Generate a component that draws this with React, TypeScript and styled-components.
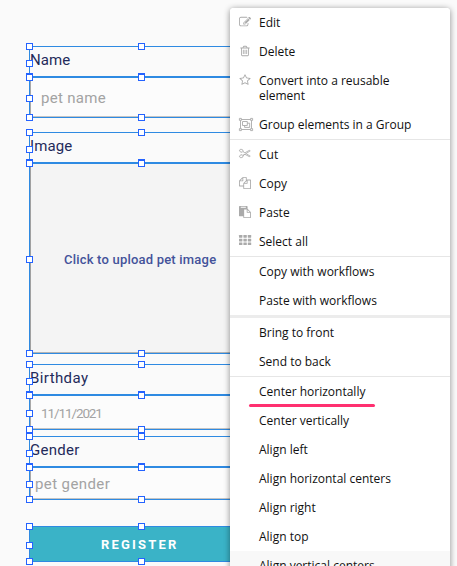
import React from "react";
import styled, { createGlobalStyle } from "styled-components";

const GlobalStyle = createGlobalStyle`
  * { box-sizing: border-box; }
  body { margin: 0; background: #fafafa; overflow: hidden; }
`;

const Page = styled.main`
  position: relative;
  width: 457px;
  height: 566px;
  overflow: hidden;
  background: #fafafa;
`;

const Form = styled.section`
  display: flex;
  flex-direction: column;
  width: 254px;
  padding: 46px 0 0 29px;
  font-family: Roboto, "Liberation Sans", sans-serif;
`;

const Group = styled.div<{ $gap: number }>`
  display: flex;
  flex-direction: column;
  margin-bottom: ${(p) => p.$gap}px;
`;

const Selected = styled.div<{ $height: number }>`
  position: relative;
  display: flex;
  height: ${(p) => p.$height}px;
  border: 1px solid #2e8ae2;
`;

const Handle = styled.i<{ $x: number; $y: number }>`
  position: absolute;
  left: ${(p) => p.$x - 4}px;
  top: ${(p) => p.$y - 4}px;
  width: 7px;
  height: 7px;
  border: 1px solid #2463ff;
  background: #fff;
  z-index: 1;
`;

const Label = styled.label`
  color: #1f2a5a;
  font-size: 15px;
  line-height: 26px;
  white-space: nowrap;
`;

const Field = styled.div<{ $indent: number }>`
  flex: 1;
  display: flex;
  align-items: center;
  padding: 2px 0 0 ${(p) => p.$indent}px;
  border-left: 1px solid #a9a9a9;
  border-bottom: 1px solid #c4c4c4;
  background: #fcfcfc;
  color: #a3a3a3;
`;

const Upload = styled.div`
  flex: 1;
  display: flex;
  align-items: center;
  padding: 3px 0 0 33px;
  border-left: 1px solid #a0a0a0;
  border-bottom: 1px solid #b4b4b4;
  background: #f4f4f4;
  color: #43529a;
`;

const Register = styled.div`
  flex: 1;
  display: flex;
  align-items: center;
  padding: 0 0 0 71px;
  background: #3ab3c7;
  color: #fff;
`;

const Text = styled.span<{ $size: number; $spacing: number; $weight?: number }>`
  font-size: ${(p) => p.$size}px;
  letter-spacing: ${(p) => p.$spacing}px;
  font-weight: ${(p) => p.$weight ?? 400};
  white-space: nowrap;
`;

const Menu = styled.nav`
  position: absolute;
  left: 230px;
  top: 8px;
  z-index: 2;
  width: 220px;
  height: 600px;
  border-radius: 4px;
  overflow: hidden;
  background: #fff;
  color: #111;
  font: 12px/15px "Open Sans", "Noto Sans", sans-serif;
`;

const Shadow = styled(Menu)`
  z-index: 1;
  overflow: visible;
  box-shadow: 0 1px 6px rgba(0, 0, 0, 0.45);
`;

const Item = styled.div<{ $hover?: boolean }>`
  display: flex;
  padding: 7px 40px 7px 9px;
  background: ${(p) => (p.$hover ? "#f8f8f8" : "#fff")};
`;

const ItemIcon = styled.span`
  flex: none;
  width: 20px;
  height: 15px;
  padding-top: 0.5px;
  color: #aaa;
  svg { display: block; overflow: visible; }
`;

const ItemText = styled.span`
  white-space: pre-line;
  flex: none;
`;

const Divider = styled.hr<{ $thick?: boolean }>`
  height: ${(p) => (p.$thick ? 3 : 1)}px;
  margin: 0;
  border: 0;
  background: ${(p) => (p.$thick ? "#ececec" : "#e6e6e6")};
`;

const Underline = styled.span`
  position: absolute;
  left: 19px;
  top: 396px;
  width: 126px;
  height: 3px;
  border-radius: 2px;
  background: #ff3070;
`;

const paths = {
  edit: "M888 1184l116-116-152-152-116 116v56h96v96h56zm440-720q-16-16-33 1l-350 350q-17 17-1 33t33-1l350-350q17-17 1-33zm80 594v190q0 119-84.5 203.5t-203.5 84.5h-832q-119 0-203.5-84.5t-84.5-203.5v-832q0-119 84.5-203.5t203.5-84.5h832q63 0 117 25 15 7 18 23 3 17-9 29l-49 49q-14 14-32 8-23-6-45-6h-832q-66 0-113 47t-47 113v832q0 66 47 113t113 47h832q66 0 113-47t47-113v-126q0-13 9-22l64-64q15-15 35-7t20 29zm-96-738l288 288-672 672h-288v-288zm444 132l-92 92-288-288 92-92q28-28 68-28t68 28l152 152q28 28 28 68t-28 68z",
  trash: "M704 736v576q0 14-9 23t-23 9h-64q-14 0-23-9t-9-23v-576q0-14 9-23t23-9h64q14 0 23 9t9 23zm256 0v576q0 14-9 23t-23 9h-64q-14 0-23-9t-9-23v-576q0-14 9-23t23-9h64q14 0 23 9t9 23zm256 0v576q0 14-9 23t-23 9h-64q-14 0-23-9t-9-23v-576q0-14 9-23t23-9h64q14 0 23 9t9 23zm128 724v-948h-896v948q0 22 7 40.5t14.5 27 10.5 8.5h832q3 0 10.5-8.5t14.5-27 7-40.5zm-672-1076h448l-48-117q-7-9-17-11h-317q-10 2-17 11zm928 32v64q0 14-9 23t-23 9h-96v948q0 83-47 143.5t-113 60.5h-832q-66 0-113-58.5t-47-141.5v-952h-96q-14 0-23-9t-9-23v-64q0-14 9-23t23-9h309l70-167q15-37 54-63t79-26h320q40 0 79 26t54 63l70 167h309q14 0 23 9t9 23z",
  star: "M1201 1004l306-297-422-62-189-382-189 382-422 62 306 297-73 421 378-199 377 199zm527-357q0 22-26 48l-363 354 86 500q1 7 1 20 0 50-41 50-19 0-40-12l-449-236-449 236q-22 12-40 12-21 0-31.5-14.5t-10.5-35.5q0-6 2-20l86-500-364-354q-25-27-25-48 0-37 56-46l502-73 225-455q19-41 49-41t49 41l225 455 502 73q56 9 56 46z",
  copy: "M1696 384q40 0 68 28t28 68v1216q0 40-28 68t-68 28h-960q-40 0-68-28t-28-68v-288h-544q-40 0-68-28t-28-68v-672q0-40 20-88t48-76l408-408q28-28 76-48t88-20h416q40 0 68 28t28 68v328q68-40 128-40h416zm-544 213l-299 299h299v-299zm-640-384l-299 299h299v-299zm196 647l316-316v-416h-384v416q0 40-28 68t-68 28h-416v640h512v-256q0-40 20-88t48-76zm956 804v-1152h-384v416q0 40-28 68t-68 28h-416v640h896z",
  paste: "M768 1664h896v-640h-416q-40 0-68-28t-28-68v-416h-384v1152zm256-1440v-64q0-13-9.5-22.5t-22.5-9.5h-704q-13 0-22.5 9.5t-9.5 22.5v64q0 13 9.5 22.5t22.5 9.5h704q13 0 22.5-9.5t9.5-22.5zm256 672h299l-299-299v299zm512 128v672q0 40-28 68t-68 28h-960q-40 0-68-28t-28-68v-160h-544q-40 0-68-28t-28-68v-1344q0-40 28-68t68-28h1088q40 0 68 28t28 68v328q21 13 36 28l408 408q28 28 48 76t20 88z",
};

const Glyph = ({ d }: { d: string }) => (
  <svg width="12" height="12" viewBox="0 0 1792 1792" fill="currentColor"><path d={d} /></svg>
);

const GroupIcon = () => (
  <svg width="14" height="13" viewBox="0 0 14 13" fill="none" stroke="currentColor" strokeWidth="0.9">
    <path d="M1.5 1.5h11v10h-11z" />
    <path d="M3.5 3.5h4.8v4H3.5zM8.3 5.2h2.4v4.2H5.6V7.5" />
    <path fill="#fff" d="M.4.4h2v2h-2zM11.6.4h2v2h-2zM.4 10.6h2v2h-2zM11.6 10.6h2v2h-2z" />
  </svg>
);

const CutIcon = () => (
  <svg width="12" height="11" viewBox="0 0 13 12" fill="none" stroke="currentColor" strokeWidth="0.9">
    <ellipse cx="2.5" cy="3" rx="2" ry="1.5" transform="rotate(20 2.5 3)" />
    <ellipse cx="2.5" cy="9" rx="2" ry="1.5" transform="rotate(-20 2.5 9)" />
    <path d="M4.2 3.9 6.4 5.2 11.2 2.6l1 .5-6.9 4.5-1.1.6M4.2 8.1l2.2-1.2 4.8 2.5 1-.5-4.4-2.7" />
  </svg>
);

const GridIcon = () => (
  <svg width="12" height="11" viewBox="0 0 12 11" fill="currentColor">
    {[0, 3.7, 7.4].map((y) =>
      [0, 4.4, 8.8].map((x) => <rect key={`${x}-${y}`} x={x} y={y} width="3.4" height="2.7" rx=".4" />),
    )}
  </svg>
);

interface BoxProps {
  height: number;
  mid: number;
  children: React.ReactNode;
}

const Box = ({ height, mid, children }: BoxProps) => (
  <Selected $height={height}>
    {children}
    <Handle $x={0} $y={0} />
    <Handle $x={112} $y={0} />
    <Handle $x={0} $y={mid} />
    <Handle $x={0} $y={height - 1} />
    <Handle $x={112} $y={height - 1} />
  </Selected>
);

interface Entry {
  text: string;
  icon?: React.ReactNode;
  hover?: boolean;
}

const sections: Entry[][] = [
  [
    { text: "Edit", icon: <Glyph d={paths.edit} /> },
    { text: "Delete", icon: <Glyph d={paths.trash} /> },
    { text: "Convert into a reusable\nelement", icon: <Glyph d={paths.star} /> },
    { text: "Group elements in a Group", icon: <GroupIcon /> },
  ],
  [
    { text: "Cut", icon: <CutIcon /> },
    { text: "Copy", icon: <Glyph d={paths.copy} /> },
    { text: "Paste", icon: <Glyph d={paths.paste} /> },
    { text: "Select all", icon: <GridIcon /> },
  ],
  [{ text: "Copy with workflows" }, { text: "Paste with workflows" }],
  [{ text: "Bring to front" }, { text: "Send to back" }],
  [
    { text: "Center horizontally" },
    { text: "Center vertically" },
    { text: "Align left" },
    { text: "Align horizontal centers" },
    { text: "Align right" },
    { text: "Align top" },
    { text: "Align vertical centers", hover: true },
  ],
];

export default function App() {
  return (
    <Page>
      <GlobalStyle />
      <Form>
        <Group $gap={14}>
          <Box height={31} mid={17}><Label><Text $size={15} $spacing={0.1}>Name</Text></Label></Box>
          <Box height={41} mid={21}><Field $indent={10}><Text $size={15} $spacing={0.3}>pet name</Text></Field></Box>
        </Group>
        <Group $gap={10}>
          <Box height={31} mid={17}><Label><Text $size={15} $spacing={0.1}>Image</Text></Label></Box>
          <Box height={191} mid={96}><Upload><Text $size={13} $spacing={0.2} $weight={500}>Click to upload pet image</Text></Upload></Box>
        </Group>
        <Group $gap={6}>
          <Box height={31} mid={17}><Label><Text $size={15} $spacing={0.4}>Birthday</Text></Label></Box>
          <Box height={35} mid={18}><Field $indent={10}><Text $size={13.5} $spacing={-1.1}>11/11/2021</Text></Field></Box>
        </Group>
        <Group $gap={26}>
          <Box height={31} mid={17}><Label><Text $size={15} $spacing={0.3}>Gender</Text></Label></Box>
          <Box height={33} mid={17}><Field $indent={4}><Text $size={15} $spacing={0.4}>pet gender</Text></Field></Box>
        </Group>
        <Box height={36} mid={19}><Register><Text $size={13} $spacing={2.2} $weight={700}>REGISTER</Text></Register></Box>
      </Form>
      <Shadow as="div" />
      <Menu>
        {sections.map((items, i) => (
          <React.Fragment key={i}>
            {i > 0 && <Divider $thick={i === 3} />}
            {items.map((item) => (
              <Item key={item.text} $hover={item.hover}>
                <ItemIcon>{item.icon}</ItemIcon>
                <ItemText>{item.text}</ItemText>
              </Item>
            ))}
          </React.Fragment>
        ))}
        <Underline />
      </Menu>
    </Page>
  );
}
